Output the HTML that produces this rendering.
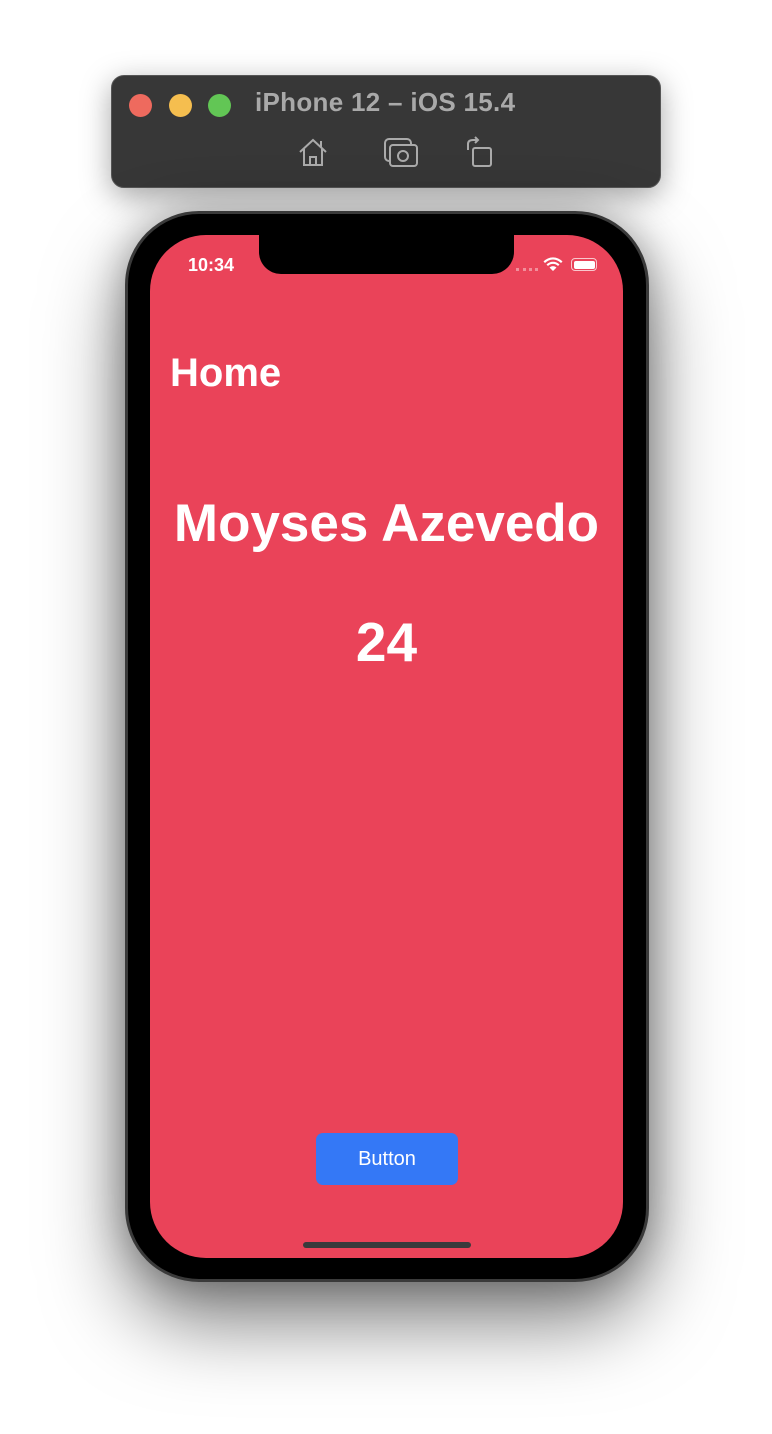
<!DOCTYPE html>
<html><head><style>
*{margin:0;padding:0;box-sizing:border-box}
body{width:772px;height:1434px;background:#fff;position:relative;overflow:hidden;font-family:"Liberation Sans",sans-serif}
.tb{position:absolute;left:111px;top:75px;width:550px;height:113px;background:#373737;border-radius:13px;border:1px solid #555;box-shadow:0 8px 30px rgba(0,0,0,.35)}
.dot{position:absolute;top:18px;width:23px;height:23px;border-radius:50%}
.title{position:absolute;left:143px;top:11px;color:#a9a9a9;font-weight:bold;font-size:26px;letter-spacing:0.3px}
.body{position:absolute;left:125px;top:211px;width:524px;height:1071px;background:#000;border-radius:74px;border:3px solid #3a3a3a;box-shadow:0 40px 80px rgba(0,0,0,.5),0 0 40px rgba(0,0,0,.3)}
.scr{position:absolute;left:150px;top:235px;width:473px;height:1023px;background:#EA4359;border-radius:56px;overflow:hidden}
.notch{position:absolute;left:109px;top:-1px;width:255px;height:40px;background:#000;border-radius:0 0 22px 22px}
.w{color:#fff;font-weight:bold;position:absolute}
</style></head><body>
<div class="tb">
<div class="dot" style="left:17px;background:#ee6a5e"></div>
<div class="dot" style="left:57px;background:#f5be4f"></div>
<div class="dot" style="left:96px;background:#62c655"></div>
<div class="title">iPhone 12 – iOS 15.4</div>
<svg style="position:absolute;left:184px;top:60px" width="34" height="34" viewBox="0 0 34 34" fill="none" stroke="#aaa" stroke-width="2"><path d="M4 16 L17 4 L30 16 M8 13 V29 H26 V13 M14 29 V21 H20 V29" /><path d="M25 5 V11"/></svg>
<svg style="position:absolute;left:271px;top:61px" width="36" height="34" viewBox="0 0 36 34" fill="none" stroke="#aaa" stroke-width="2"><rect x="2" y="2" width="26" height="22" rx="4"/><rect x="7" y="8" width="27" height="21" rx="3" fill="#373737"/><circle cx="20" cy="19" r="5"/></svg>
<svg style="position:absolute;left:353px;top:60px" width="30" height="34" viewBox="0 0 30 34" fill="none" stroke="#aaa" stroke-width="2"><rect x="8" y="12" width="18" height="18" rx="2"/><path d="M3 14 V8 Q3 4 8 4 H12 M10 1 L13 4 L10 7"/></svg>
</div>
<div class="body"></div>
<div class="scr">
<div class="notch"></div>
<div class="w" style="left:38px;top:20px;font-size:18px">10:34</div>
<div style="position:absolute;left:366px;top:33px;width:22px;height:3px;border-top:3px dotted rgba(255,255,255,.4)"></div>
<svg style="position:absolute;left:393px;top:22px" width="20" height="15" viewBox="0 0 20 15"><path d="M10 14 L6.5 10.5 A5 5 0 0 1 13.5 10.5 Z M3.5 7.5 A9 9 0 0 1 16.5 7.5 L15 9 A7 7 0 0 0 5 9Z M0.5 4.5 A13 13 0 0 1 19.5 4.5 L18 6 A11 11 0 0 0 2 6Z" fill="#fff"/></svg>
<div style="position:absolute;left:421px;top:23px;width:26px;height:13px;border:1.5px solid rgba(255,255,255,.7);border-radius:4px;padding:1.5px"><div style="background:#fff;width:100%;height:100%;border-radius:2px"></div></div>
<div class="w" style="left:20px;top:116px;font-size:40px">Home</div>
<div class="w" style="left:0;width:473px;text-align:center;top:258px;font-size:53px">Moyses Azevedo</div>
<div class="w" style="left:0;width:473px;text-align:center;top:375px;font-size:55px">24</div>
<div style="position:absolute;left:166px;top:898px;width:142px;height:52px;background:#3478F6;border-radius:7px;color:#fff;font-size:20px;text-align:center;line-height:52px">Button</div>
<div style="position:absolute;left:153px;top:1007px;width:168px;height:6px;background:#3a3a3c;border-radius:3px"></div>
</div>
</body></html>
